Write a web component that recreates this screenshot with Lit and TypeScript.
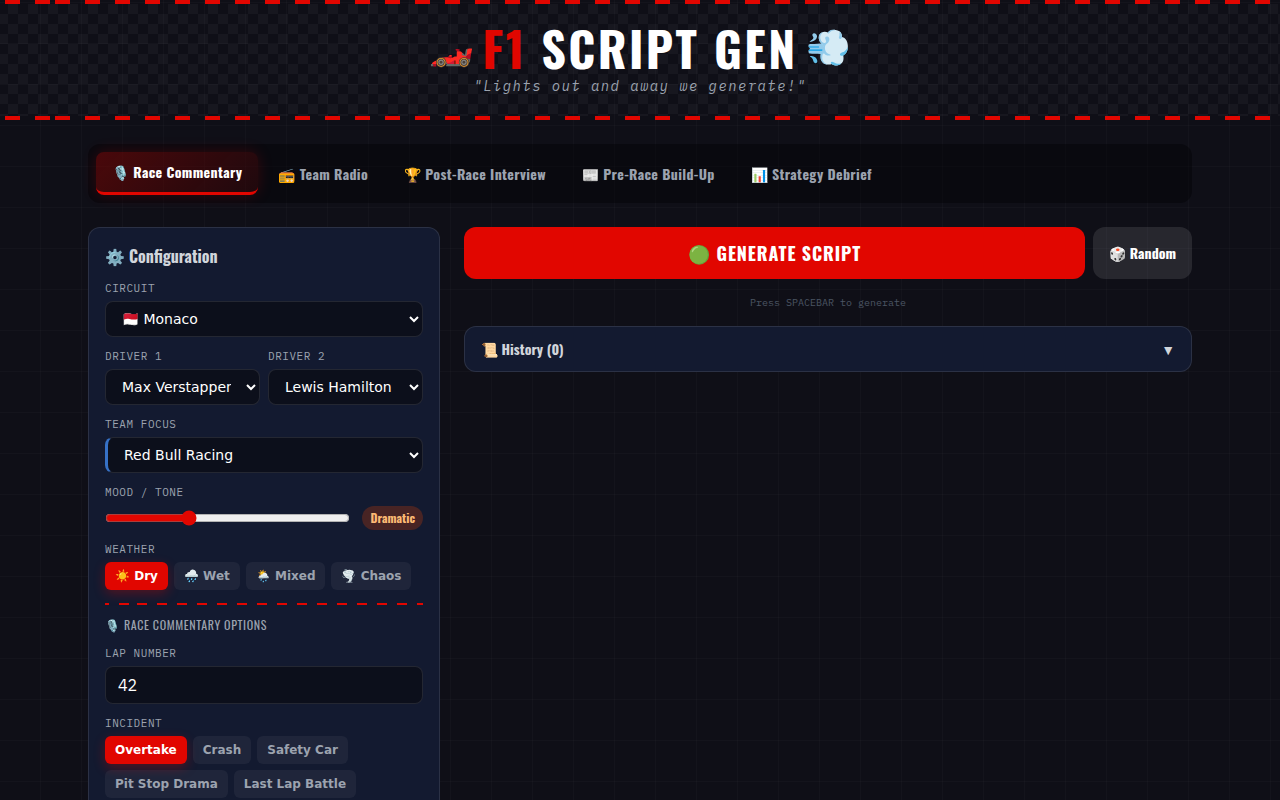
import { LitElement, html, css } from "lit";
import { customElement, state } from "lit/decorators.js";
import { classMap } from "lit/directives/class-map.js";

const TABS = [
  ["🎙️", "Race Commentary"],
  ["📻", "Team Radio"],
  ["🏆", "Post-Race Interview"],
  ["📰", "Pre-Race Build-Up"],
  ["📊", "Strategy Debrief"],
];
const CIRCUITS = ["🇲🇨 Monaco", "🇬🇧 Silverstone", "🇮🇹 Monza"];
const DRIVERS = ["Max Verstappen", "Lewis Hamilton", "Charles Leclerc", "Lando Norris"];
const TEAMS = ["Red Bull Racing", "Ferrari", "Mercedes", "McLaren"];
const MOODS = ["Calm", "Dramatic", "Intense", "Chaotic"];
const WEATHER = ["☀️ Dry", "🌧️ Wet", "🌦️ Mixed", "🌪️ Chaos"];
const INCIDENTS = ["Overtake", "Crash", "Safety Car", "Pit Stop Drama", "Last Lap Battle"];

@customElement("app-root")
export class AppRoot extends LitElement {
  @state() private tab = 0;
  @state() private mood = 1;
  @state() private weather = WEATHER[0];
  @state() private incident = INCIDENTS[0];
  @state() private open = false;

  static styles = css`
    :host {
      --red: #e10600;
      --display: Oswald, "Roboto Condensed", "Liberation Sans Narrow", "Open Sans", sans-serif;
      --mono: "IBM Plex Mono", "DejaVu Sans Mono", monospace;
      display: block;
      height: 100vh;
      overflow: hidden;
      color: #fff;
      font-family: "DejaVu Sans", sans-serif;
      background-color: #0f0f17;
      background-image:
        linear-gradient(90deg, transparent 40px, rgba(255, 255, 255, 0.02) 40px),
        linear-gradient(180deg, transparent 40px, rgba(255, 255, 255, 0.02) 40px);
      background-size: 41px 41px;
      background-position: 0 0, 0 -38px;
    }
    * { box-sizing: border-box; }
    button { font: inherit; color: inherit; border: 0; cursor: pointer; margin: 0; }
    header {
      text-align: center;
      background:
        repeating-linear-gradient(90deg, var(--red) 0 15px, transparent 15px 30px) 55px 0 / 100% 4px repeat-x,
        repeating-linear-gradient(90deg, var(--red) 0 15px, transparent 15px 30px) 55px 100% / 100% 4px repeat-x;
      padding: 4px 0;
    }
    .checker {
      padding: 20px 24px;
      background: conic-gradient(rgba(255, 255, 255, 0.035) 25%, transparent 0 50%, rgba(255, 255, 255, 0.035) 0 75%, transparent 0) -2px 0 / 20px 20px;
    }
    h1 {
      margin: 0 0 4px;
      display: flex;
      justify-content: center;
      align-items: flex-start;
      gap: 8px;
      font: 700 48px/48px var(--display);
      letter-spacing: 0.05em;
      white-space: pre;
    }
    h1 em { font-style: normal; color: var(--red); }
    .emoji { font-size: 36px; line-height: 40px; letter-spacing: 0; }
    .tagline {
      margin: 0;
      font: italic 14px/20px var(--mono);
      letter-spacing: 0.1em;
      color: #9ca3af;
    }
    main { max-width: 1152px; margin: 0 auto; padding: 24px; }
    nav {
      display: flex;
      gap: 4px;
      padding: 8px;
      margin-bottom: 24px;
      border-radius: 12px;
      background: rgba(0, 0, 6, 0.4);
    }
    .tab {
      padding: 10px 16px;
      min-height: 43px;
      border-radius: 8px;
      background: none;
      font: 700 14px/20px var(--display);
      letter-spacing: 0.025em;
      color: #9ca3af;
      white-space: nowrap;
    }
    .tab.on {
      color: #fff;
      border-bottom: 3px solid var(--red);
      background: linear-gradient(135deg, rgba(225, 6, 0, 0.3), rgba(225, 6, 0, 0.1));
      box-shadow: 0 0 15px rgba(225, 6, 0, 0.2);
    }
    .layout { display: grid; grid-template-columns: repeat(3, 1fr); gap: 24px; align-items: start; }
    .panel {
      border: 1px solid rgba(255, 255, 255, 0.1);
      border-radius: 12px;
      background: #131a30;
    }
    .config { padding: 16px; display: flex; flex-direction: column; gap: 11px; }
    h2 { margin: 0; font: 700 16px/25px var(--display); color: #d1d5db; }
    .field { display: flex; flex-direction: column; gap: 5px; min-width: 0; }
    .label { font: 11px/16px var(--mono); letter-spacing: 0.05em; color: #9ca3af; text-transform: uppercase; }
    .pair { display: grid; grid-template-columns: 1fr 1fr; gap: 8px; }
    select, .number {
      width: 100%;
      margin: 0;
      border: 1px solid rgba(255, 255, 255, 0.1);
      border-radius: 8px;
      background: #0c0f1b;
      color: #fff;
      font: 14px "DejaVu Sans", sans-serif;
      padding: 8px 12px;
      height: 36px;
    }
    .team { border-left: 3px solid #3671c6; }
    .number { height: 38px; font: 16px var(--mono); }
    .mood { display: flex; align-items: center; gap: 12px; height: 25px; }
    .mood input { flex: 1; min-width: 0; margin: 0; accent-color: var(--red); }
    .badge {
      font: 700 12px/16px var(--display);
      padding: 4px 8px;
      border-radius: 12px;
      background: #482424;
      color: #fdba74;
    }
    .chips { display: flex; flex-wrap: wrap; gap: 6px; }
    .chip {
      font: 700 12px/16px "DejaVu Sans", sans-serif;
      padding: 6px 10px;
      border-radius: 6px;
      background: rgba(255, 255, 255, 0.05);
      color: #9ca3af;
    }
    .chip.on { background: var(--red); color: #fff; box-shadow: 0 4px 12px rgba(225, 6, 0, 0.3); }
    .divider {
      height: 2px;
      margin-top: 2px;
      background: repeating-linear-gradient(90deg, var(--red) 0 10px, transparent 10px 20px) 32px 0 / 100% 2px;
    }
    h3 { margin: 0; font: 400 12px/18px var(--display); letter-spacing: 0.05em; color: #9ca3af; text-transform: uppercase; }
    .output { grid-column: span 2; }
    .actions { display: flex; gap: 8px; }
    .generate {
      flex: 1;
      padding: 12px;
      border-radius: 12px;
      background: var(--red);
      font: 700 18px/28px var(--display);
      letter-spacing: 0.05em;
    }
    .random {
      padding: 12px 16px;
      border-radius: 12px;
      background: rgba(255, 255, 255, 0.1);
      font: 700 14px/20px var(--display);
    }
    .hint { margin: 16px 0; text-align: center; font: 10px/15px var(--mono); color: #4b5563; }
    .history {
      width: 100%;
      display: flex;
      justify-content: space-between;
      align-items: center;
      padding: 12px 16px;
      background: none;
      font: 700 14px/20px var(--display);
      color: #d1d5db;
    }
  `;

  private select(label: string, id: string, items: string[], value: string, cls = "") {
    return html`<div class="field">
      <label class="label" for=${id}>${label}</label>
      <select id=${id} class=${cls}>
        ${items.map((i) => html`<option ?selected=${i === value}>${i}</option>`)}
      </select>
    </div>`;
  }

  private chips(label: string, items: string[], value: string, pick: (v: string) => void) {
    return html`<div class="field" role="group" aria-label=${label}>
      <span class="label">${label}</span>
      <div class="chips">
        ${items.map(
          (i) => html`<button class=${classMap({ chip: true, on: i === value })} aria-pressed=${i === value} @click=${() => pick(i)}>${i}</button>`,
        )}
      </div>
    </div>`;
  }

  render() {
    return html`
      <header>
        <div class="checker">
          <h1><span class="emoji">🏎️</span><span><em>F1</em> SCRIPT GEN</span><span class="emoji">💨</span></h1>
          <p class="tagline">"Lights out and away we generate!"</p>
        </div>
      </header>
      <main>
        <nav>
          ${TABS.map(
            ([icon, name], i) => html`<button class=${classMap({ tab: true, on: i === this.tab })} @click=${() => (this.tab = i)}>${icon} ${name}</button>`,
          )}
        </nav>
        <div class="layout">
          <section class="panel config">
            <h2>⚙️ Configuration</h2>
            ${this.select("Circuit", "circuit", CIRCUITS, CIRCUITS[0])}
            <div class="pair">
              ${this.select("Driver 1", "driver1", DRIVERS, DRIVERS[0])}
              ${this.select("Driver 2", "driver2", DRIVERS, DRIVERS[1])}
            </div>
            ${this.select("Team Focus", "team", TEAMS, TEAMS[0], "team")}
            <div class="field">
              <label class="label" for="mood">Mood / Tone</label>
              <div class="mood">
                <input id="mood" type="range" min="0" max="3" .value=${String(this.mood)}
                  @input=${(e: Event) => (this.mood = Number((e.target as HTMLInputElement).value))} />
                <span class="badge">${MOODS[this.mood]}</span>
              </div>
            </div>
            ${this.chips("Weather", WEATHER, this.weather, (v) => (this.weather = v))}
            <div class="divider"></div>
            <h3>${TABS[this.tab][0]} ${TABS[this.tab][1]} Options</h3>
            <div class="field">
              <label class="label" for="lap">Lap Number</label>
              <input id="lap" class="number" type="number" value="42" />
            </div>
            ${this.chips("Incident", INCIDENTS, this.incident, (v) => (this.incident = v))}
          </section>
          <section class="output">
            <div class="actions">
              <button class="generate">🟢 GENERATE SCRIPT</button>
              <button class="random">🎲 Random</button>
            </div>
            <p class="hint">Press SPACEBAR to generate</p>
            <div class="panel">
              <button class="history" aria-expanded=${this.open} @click=${() => (this.open = !this.open)}>
                <span>📜 History (0)</span><span>▼</span>
              </button>
            </div>
          </section>
        </div>
      </main>
    `;
  }
}
